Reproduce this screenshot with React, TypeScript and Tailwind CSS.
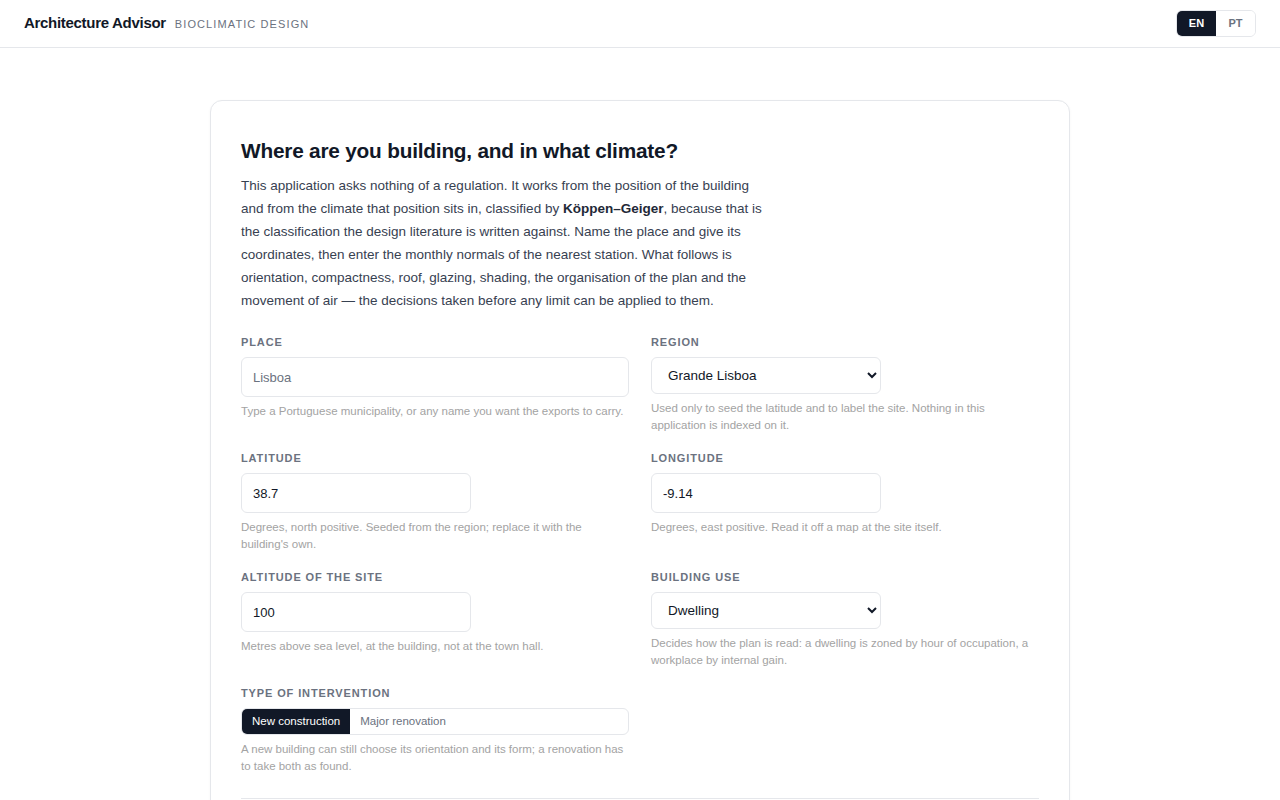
import React, { useState } from 'react';

const font = { fontFamily: '"Liberation Sans", Arial, sans-serif' };

interface FieldProps {
  label: string;
  help: string;
  children: React.ReactNode;
}

const Field: React.FC<FieldProps> = ({ label, help, children }) => (
  <div className="flex flex-col">
    <label className="mb-[8px] text-[11px] leading-[13px] font-bold uppercase tracking-[0.08em] text-[#6b7280]">
      {label}
    </label>
    {children}
    <p className="mt-[6px] text-[11.5px] leading-[17px] text-[#a3a3a3]">{help}</p>
  </div>
);

const inputClass =
  'h-[40px] rounded-md border border-[#e5e7eb] bg-white px-[11px] text-[13px] text-[#111827] placeholder:text-[#6b7280] outline-none';

const selectClass =
  'h-[37px] w-[230px] rounded-md border border-[#e5e7eb] bg-white px-3 text-[13.5px] text-[#111827] outline-none';

export default function App() {
  const [lang, setLang] = useState('EN');
  const [kind, setKind] = useState('new');
  const [place, setPlace] = useState('');
  const [lat, setLat] = useState('38.7');
  const [lon, setLon] = useState('-9.14');
  const [alt, setAlt] = useState('100');

  return (
    <div className="min-h-screen bg-white" style={font}>
      <header className="flex h-[48px] items-center justify-between border-b border-[#e5e7eb] px-6">
        <div className="flex items-baseline gap-[9px]">
          <span className="text-[15px] font-bold tracking-[-0.02em] text-[#111827]">Architecture Advisor</span>
          <span className="text-[11px] uppercase tracking-[0.1em] text-[#6b7280]">Bioclimatic design</span>
        </div>
        <div className="flex h-[27px] overflow-hidden rounded-md border border-[#e5e7eb]">
          {['EN', 'PT'].map((l) => (
            <button
              key={l}
              onClick={() => setLang(l)}
              className={`w-[39px] text-[11px] font-bold ${
                lang === l ? 'bg-[#111827] text-white' : 'bg-white text-[#6b7280]'
              }`}
            >
              {l}
            </button>
          ))}
        </div>
      </header>

      <main className="flex justify-center pt-[52px] pb-10">
        <div className="w-[860px] rounded-xl border border-[#e5e7eb] bg-white px-[30px] pt-[36px] pb-10 shadow-[0_1px_3px_rgba(0,0,0,0.04)]">
          <h1 className="text-[20.8px] leading-[28px] font-bold tracking-[-0.01em] text-[#111827]">
            Where are you building, and in what climate?
          </h1>
          <p className="mt-[9px] max-w-[530px] text-[13.5px] leading-[23px] text-[#374151]">
            This application asks nothing of a regulation. It works from the position of the building and from the
            climate that position sits in, classified by <b className="text-[#1f2937]">Köppen–Geiger</b>, because
            that is the classification the design literature is written against. Name the place and give its
            coordinates, then enter the monthly normals of the nearest station. What follows is orientation,
            compactness, roof, glazing, shading, the organisation of the plan and the movement of air — the decisions
            taken before any limit can be applied to them.
          </p>

          <div className="mt-6 grid grid-cols-2 gap-x-[22px] gap-y-[18px]">
            <Field label="Place" help="Type a Portuguese municipality, or any name you want the exports to carry.">
              <input
                className={`${inputClass} w-full`}
                placeholder="Lisboa"
                value={place}
                onChange={(e) => setPlace(e.target.value)}
              />
            </Field>
            <Field
              label="Region"
              help="Used only to seed the latitude and to label the site. Nothing in this application is indexed on it."
            >
              <select className={selectClass} defaultValue="Grande Lisboa">
                <option>Grande Lisboa</option>
                <option>Norte</option>
                <option>Centro</option>
                <option>Alentejo</option>
                <option>Algarve</option>
              </select>
            </Field>

            <Field label="Latitude" help="Degrees, north positive. Seeded from the region; replace it with the building's own.">
              <input className={`${inputClass} w-[230px]`} value={lat} onChange={(e) => setLat(e.target.value)} />
            </Field>
            <Field label="Longitude" help="Degrees, east positive. Read it off a map at the site itself.">
              <input className={`${inputClass} w-[230px]`} value={lon} onChange={(e) => setLon(e.target.value)} />
            </Field>

            <Field label="Altitude of the site" help="Metres above sea level, at the building, not at the town hall.">
              <input className={`${inputClass} w-[230px]`} value={alt} onChange={(e) => setAlt(e.target.value)} />
            </Field>
            <Field
              label="Building use"
              help="Decides how the plan is read: a dwelling is zoned by hour of occupation, a workplace by internal gain."
            >
              <select className={selectClass} defaultValue="Dwelling">
                <option>Dwelling</option>
                <option>Workplace</option>
              </select>
            </Field>

            <Field
              label="Type of intervention"
              help="A new building can still choose its orientation and its form; a renovation has to take both as found."
            >
              <div className="flex h-[27px] overflow-hidden rounded-md border border-[#e5e7eb]">
                <button
                  onClick={() => setKind('new')}
                  className={`px-[10px] text-[11.5px] ${kind === 'new' ? 'bg-[#111827] text-white' : 'bg-white text-[#6b7280]'}`}
                >
                  New construction
                </button>
                <button
                  onClick={() => setKind('reno')}
                  className={`px-[10px] text-[11.5px] ${kind === 'reno' ? 'bg-[#111827] text-white' : 'bg-white text-[#6b7280]'}`}
                >
                  Major renovation
                </button>
              </div>
            </Field>
          </div>

          <div className="mt-[23px] border-t border-[#e5e7eb] pt-8">
            <div className="h-20" />
          </div>
        </div>
      </main>
    </div>
  );
}
